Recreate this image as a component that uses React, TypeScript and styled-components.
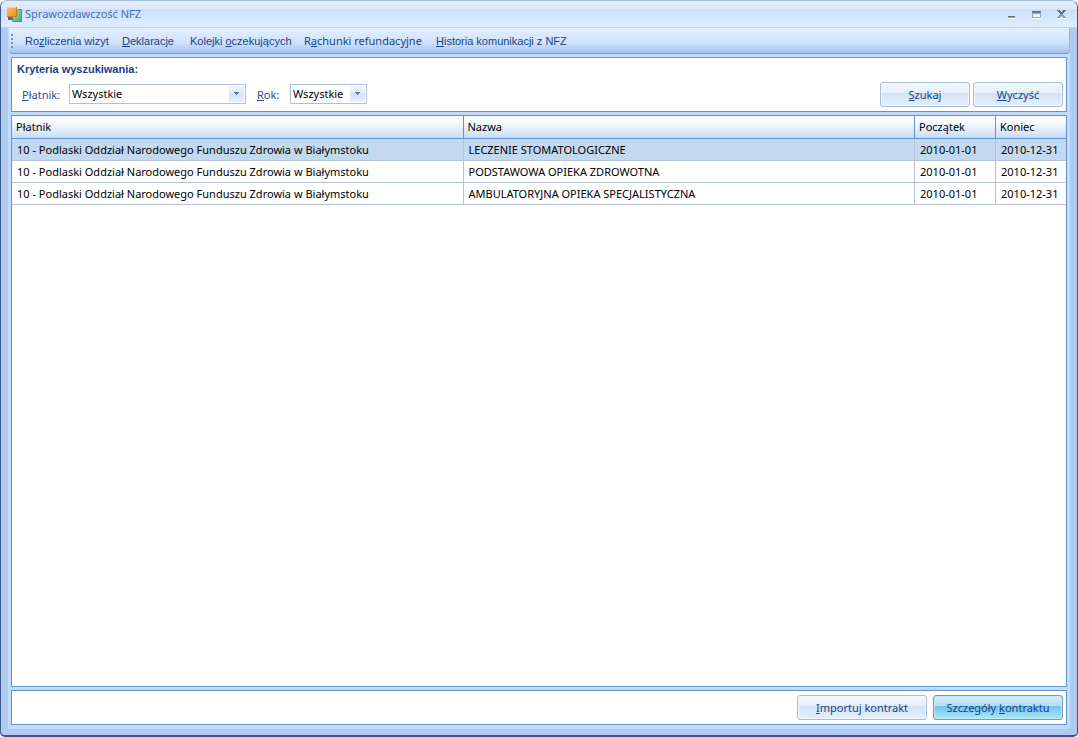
import React from 'react';
import styled, { createGlobalStyle } from 'styled-components';

const GlobalStyle = createGlobalStyle`
  *, *::before, *::after { box-sizing: border-box; }
  html, body, #root { height: 100%; }
  body {
    margin: 0;
    background: #ffffff;
    font: 11px/14px "Noto Sans", "Segoe UI", sans-serif;
    color: #000000;
  }
  button, input, select { font: inherit; }
`;

const narrow = '"Liberation Sans", Arial, sans-serif';

const Window = styled.div`
  height: 100vh;
  min-height: 300px;
  display: flex;
  flex-direction: column;
  border: 1px solid #3b5a8c;
  border-top-color: #a8bcd8;
  border-bottom-width: 2px;
  border-radius: 7px 7px 5px 5px;
  background: #b1cbf0;
  overflow: hidden;
`;

const TitleBar = styled.header`
  flex: none;
  height: 27px;
  display: flex;
  align-items: center;
  gap: 2px;
  padding: 0 4px 0 6px;
  border-bottom: 1px solid #b0cef1;
  background: linear-gradient(#e4eefc 0, #dce9fb 8px, #cadefa 8px, #e1eefe 26px);
`;

const Title = styled.h1`
  flex: 1;
  margin: 0;
  font-size: 11px;
  line-height: 14px;
  font-weight: 400;
  color: #4470bd;
`;

const CaptionButton = styled.button`
  width: 23px;
  height: 16px;
  display: grid;
  place-items: center;
  padding: 0;
  border: 0;
  background: none;
`;

const Body = styled.div`
  flex: 1;
  min-height: 0;
  display: flex;
  flex-direction: column;
  margin: 0 7px 6px 7px;
  background: #bfdbff;
`;

const MenuBar = styled.nav`
  flex: none;
  height: 26px;
  display: flex;
  align-items: center;
  margin: 0 0 3px 1px;
  padding-left: 2px;
  border-right: 1px solid #8db4e8;
  border-bottom: 1px solid #6f9dd9;
  border-radius: 0 0 4px 4px;
  background: linear-gradient(#e2eeff 0, #d6e7fe 9px, #cfe1fb 15px, #a5c2ea 25px);
`;

const Grip = styled.svg`
  flex: none;
  margin-right: 12px;
`;

const MenuItem = styled.a<{ $width: number; $wide?: boolean }>`
  flex: none;
  width: ${(p) => p.$width}px;
  white-space: nowrap;
  text-decoration: none;
  color: #15428b;
  font-family: ${(p) => (p.$wide ? 'inherit' : narrow)};
`;

const Panel = styled.section`
  flex: none;
  margin: 0 3px;
  border: 1px solid #6593cf;
  background: #ffffff;
`;

const SearchPanel = styled(Panel)`
  height: 55px;
  margin-bottom: 3px;
  padding: 4px 3px 3px 5px;
`;

const PanelTitle = styled.h2`
  margin: 0;
  font: bold 11px/14px ${narrow};
  color: #15428b;
`;

const FilterForm = styled.form`
  display: flex;
  align-items: center;
  height: 25px;
  margin-top: 6px;
`;

const FieldLabel = styled.label<{ $width: number }>`
  width: ${(p) => p.$width}px;
  padding-left: 5px;
  color: #2a4f94;
`;

const SelectBox = styled.span<{ $width: number }>`
  position: relative;
  display: block;
  width: ${(p) => p.$width}px;
  height: 20px;
  margin: 0 6px 2px 0;
`;

const Select = styled.select`
  appearance: none;
  width: 100%;
  height: 20px;
  padding: 0 17px 0 2px;
  border: 1px solid #abc1de;
  border-radius: 0;
  outline: 0;
  background: #ffffff;
  color: #000000;
`;

const SelectArrow = styled.span`
  position: absolute;
  top: 2px;
  right: 2px;
  width: 15px;
  height: 16px;
  display: grid;
  place-items: center;
  background: linear-gradient(#eff4fb 0, #e4edf9 7px, #d3e1f4 7px, #e5effc 16px);
  pointer-events: none;
`;

const Actions = styled.div<{ $gap: number }>`
  display: flex;
  gap: ${(p) => p.$gap}px;
  margin-left: auto;
`;

const Button = styled.button<{ $width: number; $primary?: boolean }>`
  width: ${(p) => p.$width}px;
  height: 25px;
  padding: 0;
  border: 1px solid ${(p) => (p.$primary ? '#7498b4' : '#a3bdd6')};
  border-radius: 3px;
  box-shadow: inset 0 0 0 1px ${(p) => (p.$primary ? '#c4e9f8' : '#f4f8fd')};
  background: ${(p) =>
    p.$primary
      ? 'linear-gradient(#d9eefa 0, #b4dcf3 10px, #78bfe8 10px, #a4eafb 23px)'
      : 'linear-gradient(#f4f7fc 0, #e6eef9 10px, #d2e1f4 10px, #e5effc 23px)'};
  color: #15428b;
`;

const ResultsPanel = styled(Panel)`
  flex: 1;
  min-height: 0;
  margin-bottom: 3px;
  overflow: auto;
`;

const Table = styled.table`
  width: 100%;
  table-layout: fixed;
  border-collapse: separate;
  border-spacing: 0;
`;

const Col = styled.col<{ $width?: number }>`
  width: ${(p) => (p.$width ? `${p.$width}px` : 'auto')};
`;

const HeadCell = styled.th`
  height: 23px;
  padding: 0 4px;
  border-right: 1px solid #6593cf;
  border-bottom: 1px solid #6593cf;
  background: linear-gradient(#ffffff 0, #f6faff 7px, #c6dcfb 22px);
  font-weight: 400;
  text-align: left;
  &:last-child { border-right: 0; }
`;

const Row = styled.tr<{ $selected?: boolean }>`
  background: ${(p) => (p.$selected ? '#c3d9f0' : '#ffffff')};
`;

const Cell = styled.td`
  height: 22px;
  padding: 0 5px;
  border-right: 1px solid #b6c3d8;
  border-bottom: 1px solid #b6c3d8;
  white-space: nowrap;
  &:last-child { border-right: 0; }
`;

const FooterPanel = styled(Panel)`
  height: 35px;
  display: flex;
  align-items: center;
  margin-bottom: 4px;
  padding-right: 3px;
`;

const AppLogo = () => (
  <svg width="16" height="16" viewBox="0 0 16 16" aria-hidden="true">
    <defs>
      <linearGradient id="orange" x1="0" y1="0" x2="1" y2="1">
        <stop offset="0" stopColor="#ffc04a" />
        <stop offset="1" stopColor="#ee9210" />
      </linearGradient>
      <linearGradient id="green" x1="0" y1="0" x2="1" y2="1">
        <stop offset="0" stopColor="#9cd8c0" />
        <stop offset="1" stopColor="#3fa87e" />
      </linearGradient>
    </defs>
    <rect x="5" y="3" width="10" height="13" fill="url(#green)" />
    <path d="M11 3.500h3.500v12H5.500V11" fill="none" stroke="#4c9686" />
    <path d="M1 11h4v3H1z" fill="#3f6b96" />
    <rect x="0" y="1" width="10" height="10" fill="url(#orange)" />
    <path d="M0 10.500h9.500V1" fill="none" stroke="#c9811c" />
    <path d="M0 1.500h9" stroke="#ffd27a" />
  </svg>
);

const Arrow = () => (
  <svg width="5" height="3" viewBox="0 0 5 3" shapeRendering="crispEdges" aria-hidden="true">
    <path d="M0 0h5v1H4v1H3v1H2V2H1V1H0z" fill="#567db1" />
  </svg>
);

interface Contract {
  payer: string;
  name: string;
  start: string;
  end: string;
}

const payer = '10 - Podlaski Oddział Narodowego Funduszu Zdrowia w Białymstoku';

const contracts: Contract[] = [
  { payer, name: 'LECZENIE STOMATOLOGICZNE', start: '2010-01-01', end: '2010-12-31' },
  { payer, name: 'PODSTAWOWA OPIEKA ZDROWOTNA', start: '2010-01-01', end: '2010-12-31' },
  { payer, name: 'AMBULATORYJNA OPIEKA SPECJALISTYCZNA', start: '2010-01-01', end: '2010-12-31' },
];

export default function App() {
  const [selected, setSelected] = React.useState(0);
  return (
    <>
      <GlobalStyle />
      <Window>
        <TitleBar>
          <AppLogo />
          <Title>Sprawozdawczość NFZ</Title>
          <CaptionButton aria-label="Minimalizuj">
            <svg width="9" height="9" viewBox="0 0 9 9" shapeRendering="crispEdges">
              <path d="M1 6h7v1H1z" fill="#5f6a7a" />
              <path d="M1 7h7v1H1z" fill="#8ea6c8" />
              <path d="M1 8h7v1H1z" fill="#fff" />
            </svg>
          </CaptionButton>
          <CaptionButton aria-label="Maksymalizuj">
            <svg width="9" height="9" viewBox="0 0 9 9" shapeRendering="crispEdges">
              <path d="M0 1h9v1H0z" fill="#5f6a7a" />
              <path d="M0 2h9v1H0z" fill="#7889a2" />
              <path d="M0 3h9v5H0z" fill="#8ea6c8" />
              <path d="M1 4h7v3H1z" fill="#edf4fe" />
              <path d="M0 8h9v1H0z" fill="#fff" />
            </svg>
          </CaptionButton>
          <CaptionButton aria-label="Zamknij">
            <svg width="9" height="9" viewBox="0 0 9 9" shapeRendering="crispEdges">
              <path d="M0 8h4v1H0zM5 8h4v1H5z" fill="#fff" />
              <path d="M0 0h3v1h1v1h1V1h1V0h3v1H8v1H7v1H6v1H3V3H2V2H1V1H0z" fill="#667285" />
              <path d="M3 4h3v1h1v1h1v1h1v1H6V7H5V6H4v1H3v1H0V7h1V6h1V5h1z" fill="#829bc0" />
            </svg>
          </CaptionButton>
        </TitleBar>
        <Body>
          <MenuBar>
            <Grip width="2" height="14" viewBox="0 0 2 14" shapeRendering="crispEdges" aria-hidden="true">
              <path d="M0 0h2v2H0zM0 4h2v2H0zM0 8h2v2H0zM0 12h2v2H0z" fill="#6f95d0" />
            </Grip>
            <MenuItem href="#rozliczenia" $width={97}>Ro<u>z</u>liczenia wizyt</MenuItem>
            <MenuItem href="#deklaracje" $width={68}><u>D</u>eklaracje</MenuItem>
            <MenuItem href="#kolejki" $width={114}>Kolejki <u>o</u>czekujących</MenuItem>
            <MenuItem href="#rachunki" $width={132} $wide>R<u>a</u>chunki refundacyjne</MenuItem>
            <MenuItem href="#historia" $width={132}><u>H</u>istoria komunikacji z NFZ</MenuItem>
          </MenuBar>
          <SearchPanel>
            <PanelTitle>Kryteria wyszukiwania:</PanelTitle>
            <FilterForm onSubmit={(e) => e.preventDefault()}>
              <FieldLabel htmlFor="payer" $width={52}><u>P</u>łatnik:</FieldLabel>
              <SelectBox $width={177}>
                <Select id="payer"><option>Wszystkie</option></Select>
                <SelectArrow><Arrow /></SelectArrow>
              </SelectBox>
              <FieldLabel htmlFor="year" $width={38}><u>R</u>ok:</FieldLabel>
              <SelectBox $width={77}>
                <Select id="year"><option>Wszystkie</option></Select>
                <SelectArrow><Arrow /></SelectArrow>
              </SelectBox>
              <Actions $gap={3}>
                <Button type="submit" $width={90}><u>S</u>zukaj</Button>
                <Button type="reset" $width={90}><u>W</u>yczyść</Button>
              </Actions>
            </FilterForm>
          </SearchPanel>
          <ResultsPanel>
            <Table>
              <colgroup>
                <Col />
                <Col />
                <Col $width={81} />
                <Col $width={70} />
              </colgroup>
              <thead>
                <tr>
                  <HeadCell>Płatnik</HeadCell>
                  <HeadCell>Nazwa</HeadCell>
                  <HeadCell>Początek</HeadCell>
                  <HeadCell>Koniec</HeadCell>
                </tr>
              </thead>
              <tbody>
                {contracts.map((c, i) => (
                  <Row key={c.name} $selected={i === selected} onClick={() => setSelected(i)}>
                    <Cell>{c.payer}</Cell>
                    <Cell>{c.name}</Cell>
                    <Cell>{c.start}</Cell>
                    <Cell>{c.end}</Cell>
                  </Row>
                ))}
              </tbody>
            </Table>
          </ResultsPanel>
          <FooterPanel>
            <Actions $gap={6}>
              <Button type="button" $width={130}><u>I</u>mportuj kontrakt</Button>
              <Button type="button" $width={130} $primary>Szczegóły <u>k</u>ontraktu</Button>
            </Actions>
          </FooterPanel>
        </Body>
      </Window>
    </>
  );
}
